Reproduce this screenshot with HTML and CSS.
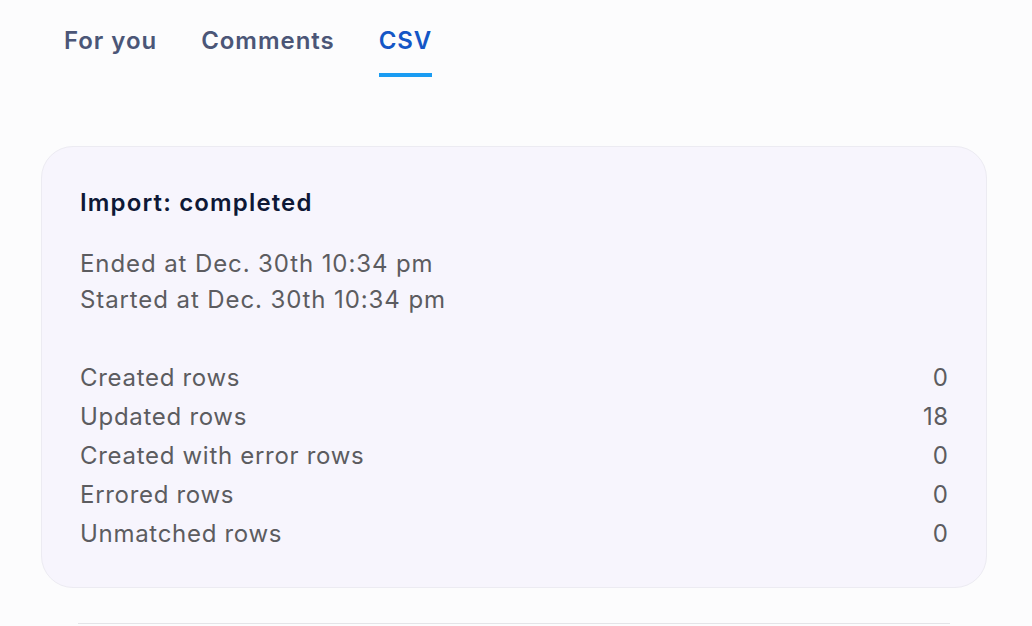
FILE: index.html
```html
<!DOCTYPE html>
<html lang="en">
<head>
<meta charset="utf-8">
<link rel="stylesheet" href="styles.css">
</head>
<body>
  <nav class="tabs">
    <a class="tab">For you</a>
    <a class="tab">Comments</a>
    <a class="tab active">CSV</a>
  </nav>
  <section class="card">
    <h2 class="title">Import: completed</h2>
    <div class="times">
      <p>Ended at Dec. 30th 10:34 pm</p>
      <p>Started at Dec. 30th 10:34 pm</p>
    </div>
    <dl class="stats">
      <div class="row"><dt>Created rows</dt><dd>0</dd></div>
      <div class="row"><dt>Updated rows</dt><dd>18</dd></div>
      <div class="row"><dt>Created with error rows</dt><dd>0</dd></div>
      <div class="row"><dt>Errored rows</dt><dd>0</dd></div>
      <div class="row"><dt>Unmatched rows</dt><dd>0</dd></div>
    </dl>
  </section>
  <div class="next"></div>
</body>
</html>
```

FILE: styles.css
```css
* { box-sizing: border-box; }
html, body { margin: 0; padding: 0; }
body {
  background: #fcfcfd;
  font-family: Inter, "Noto Sans", "Liberation Sans", sans-serif;
  width: 1032px;
  height: 626px;
  overflow: hidden;
}
.tabs {
  display: flex;
  gap: 44px;
  padding: 25px 0 0 64px;
}
.tab {
  font-size: 24px;
  line-height: 32px;
  font-weight: 600;
  letter-spacing: 0.95px;
  color: #4b5677;
  padding-bottom: 16px;
  border-bottom: 4px solid transparent;
}
.tab.active {
  color: #1456c6;
  border-bottom-color: #1a9cf2;
}
.card {
  margin: 69px 0 0 41px;
  width: 946px;
  background: #f7f5fd;
  border: 1px solid #ecebf2;
  border-radius: 32px;
  padding: 40px 38px 34px 38px;
}
.title {
  margin: 0;
  font-size: 24px;
  line-height: 32px;
  font-weight: 600;
  letter-spacing: 1.15px;
  color: #0e1836;
}
.times {
  margin-top: 27px;
}
.times p {
  margin: 0;
  font-size: 24px;
  line-height: 36px;
  letter-spacing: 0.9px;
  color: #5c5c60;
}
.stats {
  margin: 40px 0 0;
}
.row {
  display: flex;
  justify-content: space-between;
  font-size: 24px;
  line-height: 39px;
  letter-spacing: 0.7px;
  color: #5c5c60;
}
.row dt, .row dd { margin: 0; }
.row dd { letter-spacing: 0.4px; margin-right: -0.4px; }
.next {
  margin: 35px 0 0 78px;
  width: 872px;
  border-top: 1px solid #e4e4e8;
}
```
